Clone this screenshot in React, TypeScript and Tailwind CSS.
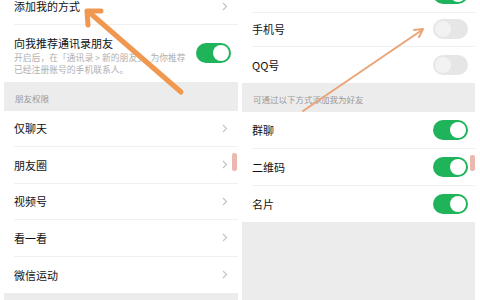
import React from "react"

type ToggleProps = { on?: boolean }

const Toggle = ({ on }: ToggleProps) => (
    <div className={on ? "flex h-[20px] w-[35px] items-center justify-end rounded-full bg-[#1fb35a] px-[2px]" : "flex h-[20px] w-[35px] items-center justify-start rounded-full bg-[#e6e6e6] px-[2px]"}>
        <div className={on ? "h-[16px] w-[16px] rounded-full bg-white" : "h-[16px] w-[16px] rounded-full bg-[#f2f2f2]"} />
    </div>
)

const Chevron = () => (
    <svg width="6" height="9" viewBox="0 0 6 9" className="mr-[10px]">
        <path d="M1 1 L4.5 4.5 L1 8" fill="none" stroke="#c4c4c4" strokeWidth="1.2" />
    </svg>
)

const LinkRow = ({ label, h = "h-[36.5px]", last }: { label: string; h?: string; last?: boolean }) => (
    <div className={`flex ${h} items-center bg-white pl-[10px]`}>
        <div className={last ? "flex h-full flex-1 items-center justify-between" : "flex h-full flex-1 items-center justify-between border-b border-[#f0f0f0]"}>
            <span className="text-[11px] leading-[12px] text-[#111]">{label}</span>
            <Chevron />
        </div>
    </div>
)

const SwitchRow = ({ label, on, h = "h-[36.5px]", last }: { label: string; on?: boolean; h?: string; last?: boolean }) => (
    <div className={`flex ${h} items-center bg-white pl-[10px]`}>
        <div className={last ? "flex h-full flex-1 items-center justify-between pr-[7px]" : "flex h-full flex-1 items-center justify-between border-b border-[#f0f0f0] pr-[7px]"}>
            <span className="text-[11px] leading-[12px] text-[#111]">{label}</span>
            <Toggle on={on} />
        </div>
    </div>
)

const Header = ({ text }: { text: string }) => (
    <div className="flex h-[29px] items-end bg-[#ececec] pb-[6px] pl-[11px]">
        <span className="text-[8.5px] text-[#9a9a9a]">{text}</span>
    </div>
)

export default function App() {
    return (
        <div className="relative h-[300px] w-[480px] overflow-hidden bg-white" style={{ fontFamily: '"Noto Sans CJK SC", "Noto Sans", sans-serif' }}>
            <div className="flex h-full">
                {/* left phone */}
                <div className="ml-[4px] flex w-[234px] flex-col">
                    <div className="-mt-[11px]">
                        <LinkRow label="添加我的方式" h="h-[35.5px]" />
                    </div>
                    <div className="flex h-[57px] items-start bg-white pl-[10px] pt-[10px] pr-[7px]">
                        <div className="flex flex-1 flex-col">
                            <span className="text-[11px] leading-[16px] text-[#111]">向我推荐通讯录朋友</span>
                            <span className="mt-[1px] whitespace-nowrap text-[8.8px] leading-[12px] text-[#b0b0b0]">开启后，在「通讯录 &gt; 新的朋友」，为你推荐</span>
                            <span className="whitespace-nowrap text-[8.8px] leading-[12px] text-[#b0b0b0]">已经注册账号的手机联系人。</span>
                        </div>
                        <div className="mt-[8px]">
                            <Toggle on />
                        </div>
                    </div>
                    <Header text="朋友权限" />
                    <LinkRow label="仅聊天" />
                    <LinkRow label="朋友圈" />
                    <LinkRow label="视频号" />
                    <LinkRow label="看一看" />
                    <LinkRow label="微信运动" last />
                    <div className="flex-1 bg-[#ececec]" />
                </div>

                <div className="w-[4px]" />

                {/* right phone */}
                <div className="flex w-[233px] flex-col">
                    <div className="-mt-[24px]">
                        <SwitchRow label="" on />
                    </div>
                    <SwitchRow label="手机号" h="h-[34px]" />
                    <SwitchRow label="QQ号" h="h-[36px]" last />
                    <Header text="可通过以下方式添加我为好友" />
                    <SwitchRow label="群聊" on h="h-[37px]" />
                    <SwitchRow label="二维码" on h="h-[37px]" />
                    <SwitchRow label="名片" on h="h-[36px]" last />
                    <div className="flex-1 bg-[#ececec]" />
                </div>
            </div>

            {/* scroll marks */}
            <div className="absolute left-[232px] top-[153px] h-[18px] w-[5px] rounded-[2px] bg-[#ecb7ae]" />
            <div className="absolute left-[470px] top-[155px] h-[16px] w-[5px] rounded-[2px] bg-[#ecb7ae]" />

            {/* arrows */}
            <svg className="pointer-events-none absolute inset-0" width="480" height="300" viewBox="0 0 480 300">
                <g stroke="#f0984f" strokeWidth="5" strokeLinecap="round" strokeLinejoin="round" fill="none">
                    <line x1="181" y1="92" x2="90" y2="13" />
                    <polyline points="88,25 87,11 101,11" />
                </g>
                <g stroke="#e9a577" strokeWidth="2" strokeLinecap="round" strokeLinejoin="round" fill="none">
                    <line x1="303" y1="111" x2="422" y2="30" />
                    <polyline points="414,30 423,29 419,37" />
                </g>
            </svg>
        </div>
    )
}
